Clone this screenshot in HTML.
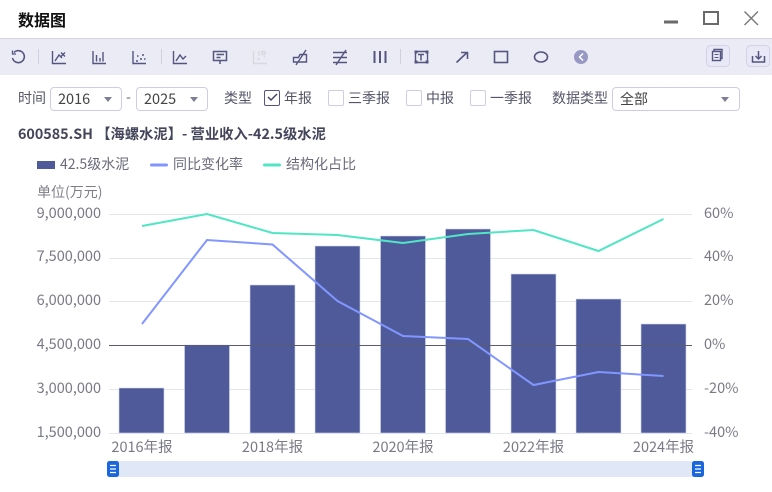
<!DOCTYPE html>
<html><head><meta charset="utf-8">
<style>
html,body{margin:0;padding:0;background:#fff}
body{width:772px;height:492px;position:relative;overflow:hidden;font-family:"Noto Sans CJK SC","Liberation Sans",sans-serif;font-size:13px;color:#5a5a6e}
.a{position:absolute;white-space:nowrap}
.sel{position:absolute;top:87px;height:22px;border:1px solid #cfcde3;border-radius:4px;background:#fff;box-sizing:content-box}
.sel span{position:absolute;left:7px;top:2px;font-size:14.5px;line-height:18px;color:#444}
.tri{position:absolute;top:9px;width:0;height:0;border-left:4px solid transparent;border-right:4px solid transparent;border-top:5px solid #7d7d96}
.cb{position:absolute;top:90px;width:14px;height:14px;border:1px solid #cfcde3;border-radius:2px;background:#fff}
.lb{position:absolute;top:89px;font-size:14px;line-height:18px;color:#55556a;white-space:nowrap}
svg{position:absolute;left:0;top:0}
</style></head><body>
<div class="a" style="left:18px;top:8px;font-size:16px;font-weight:bold;line-height:22px;color:#111">数据图</div>
<svg width="772" height="38">
<rect x="664" y="20.500" width="14" height="3" fill="#6a6a6a"/>
<rect x="704" y="12" width="14" height="12" fill="none" stroke="#6a6a6a" stroke-width="2"/>
<path d="M744.500 11.500L758 25M758 11.500L744.500 25" stroke="#777" stroke-width="1.400" fill="none"/>
</svg>
<div class="a" style="left:0;top:38px;width:772px;height:37px;background:#ebebf6;border-top:1px solid #d3d3de;box-sizing:border-box"></div>
<svg width="772" height="80" fill="none" stroke="#55557f" stroke-width="1.400">
<path d="M14 52.500A6 6 0 1 1 12.500 58" stroke-width="1.600"/><path d="M12.500 50.500v3.500h3.500" stroke-width="1.300"/>
<path d="M38.500 49v15M161.500 49v15M400.500 49v15" stroke="#cfcfdf" stroke-width="1"/>
<path d="M52.500 51v12.500h13.500M55 61l4-6 3 3M61 52.500l4 4M65 52.500l-4 4"/>
<path d="M93 51v12.500h13M96.500 55v6.500M100 58v3.500M103 52v9.500"/>
<path d="M133 51v12.500h13M136 61h2M140 59h2M142 55h2M137 56h1.500M144 59h1.500"/>
<path d="M173.500 51v12.500h13.500M176 61l4-6 3 4 3-3"/>
<path d="M213.500 51.500h13v9h-13zM216.500 54.500h7.500M216.500 57.500h4" stroke-width="1.500"/><path d="M220 61v3" stroke-width="1.500"/>
<g stroke="#d8d8e0"><path d="M253.500 51v12.500h13.500"/><path d="M258 52h1v4M262 51.500h3v3h-3zM257 59h3M264 57h1"/></g>
<path d="M293.500 61.500v-4h5l1.500-3h6.500v7.500h-13zM296 65l10-15" stroke-width="1.400"/>
<path d="M333 52.500h14M333 57.500h14M333 62.500h14M336 65l10-15" stroke-width="1.400"/>
<path d="M374.500 51v12M380 51v12M385.500 51v12" stroke-width="2"/>
<path d="M415.500 51.500h12v11h-12z"/><path d="M418 54.500h6M421 54.500v6" stroke-width="1.500"/><path d="M414.500 50.500h3v3h-3zM425.500 50.500h3v3h-3zM414.500 60.500h3v3h-3zM425.500 60.500h3v3h-3z" fill="#55557f" stroke="none"/>
<path d="M456.500 62.500l10-9.500M461 52.500h6.500v6.500" stroke-width="1.600"/>
<rect x="494.500" y="51.500" width="13" height="11" stroke-width="1.600"/>
<ellipse cx="541" cy="57" rx="6.500" ry="5" stroke-width="1.600"/>
<circle cx="581" cy="57" r="7" fill="#9898c4" stroke="none"/><path d="M583 53.500l-3.500 3.500 3.500 3.500" stroke="#fff" stroke-width="1.500"/>
<rect x="706.500" y="45.500" width="23" height="21" rx="4" fill="#e8e8f6" stroke="#d2d2e8" stroke-width="1"/>
<path d="M714 51v-1.500h8v9h-1.500"/><rect x="712.500" y="51.500" width="8" height="9"/><path d="M714.500 54.500h4M714.500 57.500h4" stroke-width="1"/>
<rect x="746.500" y="45.500" width="23" height="21" rx="4" fill="#e8e8f6" stroke="#d2d2e8" stroke-width="1"/>
<path d="M752.500 56v6h12v-6M758.500 51v7M755.500 56l3 3 3-3" stroke-width="1.500"/>
</svg>

<div class="a" style="left:18px;top:89px;font-size:14px;line-height:18px;color:#55556a">时间</div>
<div class="sel" style="left:50px;width:70px"><span>2016</span><i class="tri" style="left:53px"></i></div>
<div class="a" style="left:126px;top:88px;font-size:14px;line-height:18px;color:#55556a">-</div>
<div class="sel" style="left:136px;width:70px"><span>2025</span><i class="tri" style="left:53px"></i></div>
<div class="a" style="left:224px;top:89px;font-size:14px;line-height:18px;color:#55556a">类型</div>
<div class="cb" style="left:264px;border-color:#55557f"></div>
<svg width="772" height="120"><path d="M268 97l3 3 6-6" fill="none" stroke="#45456f" stroke-width="1.500"/></svg>
<div class="lb" style="left:284px">年报</div>
<div class="cb" style="left:328px"></div>
<div class="lb" style="left:348px">三季报</div>
<div class="cb" style="left:406px"></div>
<div class="lb" style="left:426px">中报</div>
<div class="cb" style="left:470px"></div>
<div class="lb" style="left:490px">一季报</div>
<div class="lb" style="left:552px">数据类型</div>
<div class="sel" style="left:612px;width:126px"><span style="font-size:14px">全部</span><i class="tri" style="left:108px"></i></div>

<div class="a" style="left:18px;top:125px;font-size:14.3px;font-weight:bold;line-height:18px;color:#44445a">600585.SH 【海螺水泥】- 营业收入-42.5级水泥</div>

<svg width="772" height="492" font-family="'Noto Sans CJK SC','Liberation Sans',sans-serif">
<rect x="37" y="161" width="18" height="8" fill="#4f5a9a"/>
<text x="60" y="169" font-size="14" fill="#6a6a7a">42.5级水泥</text>
<rect x="150" y="163.500" width="18" height="3" rx="1.500" fill="#8296ff"/>
<text x="173" y="169" font-size="14" fill="#6a6a7a">同比变化率</text>
<rect x="263" y="163.500" width="18" height="3" rx="1.500" fill="#50e6c4"/>
<text x="286" y="169" font-size="14" fill="#6a6a7a">结构化占比</text>
<text x="37" y="197" font-size="14" fill="#7e7e8a">单位(万元)</text>

<g stroke="#e2e5f2" stroke-width="1">
<path d="M109 214.500H692M109 258.500H692M109 301.500H692M109 389.500H692M109 433.500H692"/>
</g>
<g fill="#4f5a9a" stroke="#d5d8ea" stroke-width="0.600">
<rect x="119" y="388" width="45" height="45"/>
<rect x="184.500" y="345" width="45" height="88"/>
<rect x="250" y="285" width="45" height="148"/>
<rect x="315" y="246" width="45" height="187"/>
<rect x="380.500" y="236" width="45" height="197"/>
<rect x="445.500" y="229" width="45" height="204"/>
<rect x="511" y="274" width="45" height="159"/>
<rect x="576" y="299" width="45" height="134"/>
<rect x="641" y="324" width="45" height="109"/>
</g>
<path d="M109 345.500H692" stroke="#5a5a72" stroke-width="1"/>
<polyline points="142,324 207,240 272.500,244.500 337.500,301 403,336 468,339 533.500,385 598.500,372 663.500,376" fill="none" stroke="#8296ff" stroke-width="2"/>
<polyline points="142,226 207,214 272.500,233 337.500,235 403,243 468,234 533.500,230 598.500,251 663.500,219" fill="none" stroke="#50e6c4" stroke-width="2"/>

<g font-size="14.500" fill="#7a7a86" text-anchor="end">
<text x="101" y="218">9,000,000</text>
<text x="101" y="261">7,500,000</text>
<text x="101" y="305">6,000,000</text>
<text x="101" y="349">4,500,000</text>
<text x="101" y="393">3,000,000</text>
<text x="101" y="437">1,500,000</text>
</g>
<g font-size="14.500" fill="#7a7a86">
<text x="704" y="218">60%</text>
<text x="704" y="261">40%</text>
<text x="704" y="305">20%</text>
<text x="704" y="349">0%</text>
<text x="704" y="393">-20%</text>
<text x="704" y="437">-40%</text>
</g>
<g font-size="14.500" fill="#7a7a86" text-anchor="middle">
<text x="142" y="452">2016年报</text>
<text x="272.500" y="452">2018年报</text>
<text x="403" y="452">2020年报</text>
<text x="533.500" y="452">2022年报</text>
<text x="663.500" y="452">2024年报</text>
</g>

<rect x="113" y="461" width="585" height="16" fill="#e0e8f8"/>
<rect x="107" y="461" width="12" height="16" rx="2.500" fill="#1a66dd"/>
<rect x="692" y="461" width="12" height="16" rx="2.500" fill="#1a66dd"/>
<path d="M110 465.500h6M110 469h6M110 472.500h6M695 465.500h6M695 469h6M695 472.500h6" stroke="#fff" stroke-width="1.200"/>
</svg>
</body></html>
